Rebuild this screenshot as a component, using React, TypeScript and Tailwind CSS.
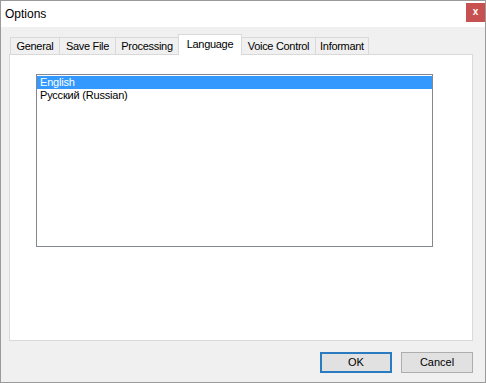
import React from "react";

const tabs = [
  { label: "General", cls: "w-[49px] border-l" },
  { label: "Save File", cls: "w-[56px] border-l" },
  { label: "Processing", cls: "w-[63px] border-l" },
  { label: "Language", cls: "w-[64px]", selected: true },
  { label: "Voice Control", cls: "w-[73px]" },
  { label: "Informant", cls: "w-[54px] border-l border-r" },
];

export default function App() {
  return (
    <div
      className="w-[486px] h-[383px] border border-[#9a9a9a] bg-[#f0f0f0] flex flex-col text-black"
      style={{ fontFamily: '"Liberation Sans", Arial, sans-serif' }}
    >
      {/* title bar */}
      <div className="h-[26px] bg-white flex items-start justify-between shrink-0">
        <div className="h-[26px] flex items-center pl-[4px] text-[12px] leading-[15px]">Options</div>
        <div className="mt-[2px] w-[19px] h-[19px] bg-[#c75050] flex items-center justify-center text-white text-[10px] font-bold leading-none pb-[2px]">
          x
        </div>
      </div>

      {/* body */}
      <div className="flex-1 flex flex-col pt-[7px] pl-[8px] pr-[12px]">
        <div className="flex items-end h-[20px] ml-[1px] relative z-10">
          {tabs.map((t) =>
            t.selected ? (
              <div
                key={t.label}
                className={`${t.cls} h-[21px] -mb-px bg-white border-l border-r border-t border-[#d9d9d9] flex items-start justify-center pt-[3px] text-[11px] leading-[13px] tracking-[-0.3px]`}
              >
                {t.label}
              </div>
            ) : (
              <div
                key={t.label}
                className={`${t.cls} h-[17px] border-t border-[#d9d9d9] bg-[#f0f0f0] flex items-center justify-center text-[11px] leading-[13px] tracking-[-0.3px]`}
              >
                {t.label}
              </div>
            )
          )}
        </div>
        <div className="w-[464px] h-[287px] bg-white border border-[#d9d9d9] shrink-0">
          <div className="ml-[26px] mt-[19px] w-[397px] h-[173px] border border-[#828790] bg-white pt-px text-[11px] leading-[13px] tracking-[-0.2px]">
            <div className="h-[13px] bg-[#3399ff] text-white pl-[3px]">English</div>
            <div className="h-[13px] pl-[3px]">Русский (Russian)</div>
          </div>
        </div>
        <div className="mt-[11px] flex justify-end gap-[9px]">
          <button className="w-[72px] h-[21px] bg-[#e1e1e1] border-2 border-[#2a7bc0] text-[11px] leading-none flex items-center justify-center">
            OK
          </button>
          <button className="w-[72px] h-[21px] bg-[#e1e1e1] border border-[#adadad] text-[11px] leading-none flex items-center justify-center">
            Cancel
          </button>
        </div>
      </div>
    </div>
  );
}
